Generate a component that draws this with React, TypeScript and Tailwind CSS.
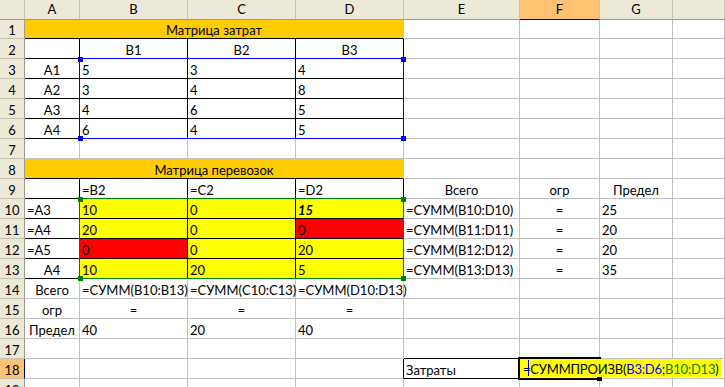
import React from "react";
import clsx from "clsx";

type Spec = {
  t?: string;
  a?: "c" | "l";
  fill?: "y" | "r" | "o";
  rb?: boolean;
  bb?: boolean;
  span?: boolean;
  bi?: boolean;
};

const cols = ["A", "B", "C", "D", "E", "F", "G", ""];

const box = { rb: true, bb: true };
const e: Spec = {};

const rows: Spec[][] = [
  [{ t: "Матрица затрат", a: "c", fill: "o", span: true, bb: true }, e, e, e, e],
  [box, { t: "B1", a: "c", ...box }, { t: "B2", a: "c", ...box }, { t: "B3", a: "c", ...box }, e, e, e, e],
  [{ t: "A1", a: "c", ...box }, { t: "5", ...box }, { t: "3", ...box }, { t: "4", ...box }, e, e, e, e],
  [{ t: "A2", a: "c", ...box }, { t: "3", ...box }, { t: "4", ...box }, { t: "8", ...box }, e, e, e, e],
  [{ t: "A3", a: "c", ...box }, { t: "4", ...box }, { t: "6", ...box }, { t: "5", ...box }, e, e, e, e],
  [{ t: "A4", a: "c", ...box }, { t: "6", ...box }, { t: "4", ...box }, { t: "5", ...box }, e, e, e, e],
  [e, e, e, e, e, e, e, e],
  [{ t: "Матрица перевозок", a: "c", fill: "o", span: true, bb: true }, e, e, e, e],
  [box, { t: "=B2", ...box }, { t: "=C2", ...box }, { t: "=D2", ...box }, { t: "Всего", a: "c" }, { t: "огр", a: "c" }, { t: "Предел", a: "c" }, e],
  [{ t: "=A3", ...box }, { t: "10", fill: "y", ...box }, { t: "0", fill: "y", ...box }, { t: "15", fill: "y", bi: true, ...box }, { t: "=СУММ(B10:D10)" }, { t: "=", a: "c" }, { t: "25" }, e],
  [{ t: "=A4", ...box }, { t: "20", fill: "y", ...box }, { t: "0", fill: "y", ...box }, { t: "0", fill: "r", ...box }, { t: "=СУММ(B11:D11)" }, { t: "=", a: "c" }, { t: "20" }, e],
  [{ t: "=A5", ...box }, { t: "0", fill: "r", ...box }, { t: "0", fill: "y", ...box }, { t: "20", fill: "y", ...box }, { t: "=СУММ(B12:D12)" }, { t: "=", a: "c" }, { t: "20" }, e],
  [{ t: "A4", a: "c", ...box }, { t: "10", fill: "y", ...box }, { t: "20", fill: "y", ...box }, { t: "5", fill: "y", ...box }, { t: "=СУММ(B13:D13)" }, { t: "=", a: "c" }, { t: "35" }, e],
  [{ t: "Всего", a: "c" }, { t: "=СУММ(B10:B13)" }, { t: "=СУММ(C10:C13)" }, { t: "=СУММ(D10:D13)" }, e, e, e, e],
  [{ t: "огр", a: "c" }, { t: "=", a: "c" }, { t: "=", a: "c" }, { t: "=", a: "c" }, e, e, e, e],
  [{ t: "Предел", a: "c" }, { t: "40" }, { t: "20" }, { t: "40" }, e, e, e, e],
  [e, e, e, e, { bb: true }, e, e, e],
  [e, e, e, { rb: true }, { t: "Затраты", ...box }, e, e, e],
  [e, e, e, e, e, e, e, e],
  [e, e, e, e, e, e, e, e],
];

function Cell({ s }: { s: Spec }) {
  return (
    <div
      className={clsx(
        "flex items-end whitespace-nowrap border-r border-b px-[2px] text-[13px] leading-[16px] text-black",
        s.rb ? "border-r-black" : "border-r-[#c0c0c0]",
        s.bb ? "border-b-black" : "border-b-[#c0c0c0]",
        s.a === "c" ? "justify-center" : "justify-start",
        s.span && "col-span-4",
        s.fill === "y" && "bg-[#ffff00]",
        s.fill === "r" && "bg-[#ff0000]",
        s.fill === "o" && "bg-[#ffcc00]",
        s.bi && "font-bold italic"
      )}
    >
      {s.t}
    </div>
  );
}

// corner handles of a highlighted range
function Handles({ x1, y1, x2, y2, color }: { x1: number; y1: number; x2: number; y2: number; color: string }) {
  const pts = [
    [x1, y1],
    [x2, y1],
    [x1, y2],
    [x2, y2],
  ];
  return (
    <>
      {pts.map(([x, y], i) => (
        <div
          key={i}
          className={clsx("absolute h-[5px] w-[5px]", color)}
          style={{ left: x - 2, top: y - 2 }}
        />
      ))}
    </>
  );
}

export default function App() {
  return (
    <div className="relative h-[387px] w-[725px] overflow-hidden bg-white font-[Lato,sans-serif]">
      <div className="grid grid-cols-[25px_55px_108px_108px_108px_116px_80px_73px_1fr] grid-rows-[20px_19px_repeat(19,20px)]">
        {/* column headers */}
        <div className="border-r border-b border-r-[#c5c2b2] border-b-[#9d9a8c] bg-[#ece9d8]" />
        {cols.map((c) => (
          <div
            key={c || "h"}
            className={clsx(
              "flex items-center justify-center border-r border-b text-[13px] leading-[19px] text-black",
              c === "F"
                ? "border-r-[#c5c2b2] border-b-[#000080] bg-[#ffc273]"
                : "border-r-[#c5c2b2] border-b-[#9d9a8c] bg-[#ece9d8]"
            )}
          >
            {c}
          </div>
        ))}

        {rows.map((row, r) => (
          <React.Fragment key={r}>
            <div
              className={clsx(
                "flex items-end justify-center border-r border-b text-[13px] leading-[16px] text-black",
                r + 1 === 18
                  ? "border-r-[#000080] border-b-[#c5c2b2] bg-[#ffc273]"
                  : "border-r-[#9d9a8c] border-b-[#c5c2b2] bg-[#ece9d8]"
              )}
            >
              {r + 1}
            </div>
            {row.map((s, i) => (
              <Cell key={i} s={s} />
            ))}
          </React.Fragment>
        ))}
      </div>

      {/* referenced ranges of the formula being edited */}
      <div className="absolute left-[79px] top-[58px] h-[81px] w-[325px] border border-[#0000ff]" />
      <Handles x1={80} y1={59} x2={403} y2={138} color="bg-[#0000ff]" />
      <div className="absolute left-[79px] top-[198px] h-[81px] w-[325px] border border-[#008000]" />
      <Handles x1={80} y1={199} x2={403} y2={278} color="bg-[#008000]" />

      {/* active cell F18 in edit mode */}
      <div className="absolute left-[518px] top-[357px] h-[23px] w-[83px] border-2 border-black" />
      <div className="absolute left-[597px] top-[376px] h-[5px] w-[5px] bg-black" />
      <div className="absolute left-[520px] top-[359px] flex h-[18px] w-[202px] items-end bg-[#ffff00] pl-[3px] text-[13px] leading-[16px] tracking-[-0.2px] whitespace-nowrap text-black">
        <span>=</span>
        <span className="mb-[1px] -ml-[2px] mr-[1px] inline-block h-[16px] w-px bg-[#0000ff]" />
        <span>СУММПРОИЗВ(</span>
        <span className="text-[#0000ff]">B3:D6</span>
        <span>;</span>
        <span className="text-[#008000]">B10:D13</span>
        <span>)</span>
      </div>
    </div>
  );
}
